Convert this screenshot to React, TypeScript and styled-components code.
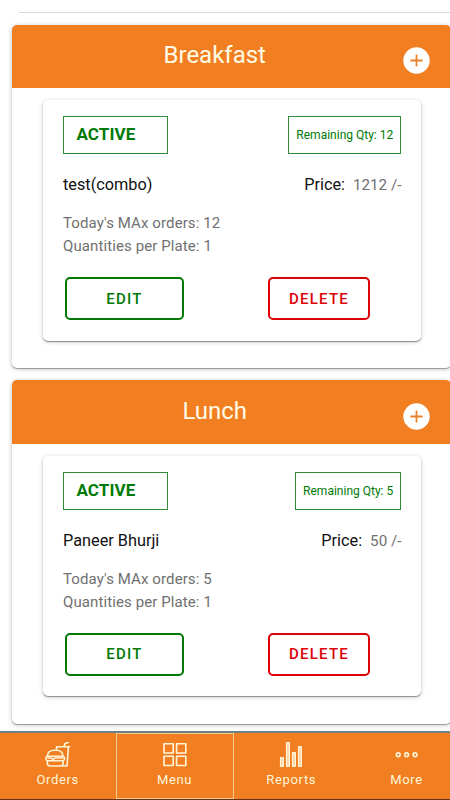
import React from "react";
import styled, { createGlobalStyle } from "styled-components";

const GlobalStyle = createGlobalStyle`
  * { box-sizing: border-box; }
  body { margin: 0; background: #fff; font-family: Roboto, sans-serif; overflow: hidden; }
`;

const Screen = styled.div`
  width: 450px;
  height: 800px;
  display: flex;
  flex-direction: column;
  overflow: hidden;
  background: #fff;
`;

const Content = styled.main`
  height: 731px;
  flex: none;
  overflow: hidden;
`;

const Divider = styled.div`
  height: 13px;
  margin: 0 0 12px 19px;
  border-bottom: 1px solid #d8d8d8;
`;

const Section = styled.section`
  width: 439px;
  height: 343.4px;
  margin: 0 0 12px 12px;
  border-radius: 5px;
  background: #fff;
  box-shadow: 0 1px 1px rgba(0, 0, 0, 0.3), 0 1px 5px rgba(0, 0, 0, 0.24);
`;

const SectionHeader = styled.header`
  height: 63.3px;
  display: grid;
  grid-template-columns: 1fr 27px;
  padding-right: 21px;
  border-radius: 5px 5px 0 0;
  background: #f17f21;
  color: #fffbe6;
`;

const SectionTitle = styled.h2`
  margin: 0;
  padding: 16.2px 0 0 14.5px;
  font-size: 24px;
  font-weight: 400;
  line-height: 28px;
  text-align: center;
`;

const AddButton = styled.button`
  width: 27px;
  height: 27px;
  margin-top: 22.2px;
  padding: 0;
  border: 0;
  background: none;
  svg { display: block; }
`;

const ItemCard = styled.article`
  width: 378px;
  height: 240.8px;
  margin: 11.9px 0 0 31px;
  padding: 16px 19.6px 0 20px;
  border-radius: 5px;
  background: #fff;
  box-shadow: 0 1px 1px rgba(0, 0, 0, 0.38), 0 1px 5px rgba(0, 0, 0, 0.2);
`;

const Row = styled.div`
  display: flex;
  justify-content: space-between;
`;

const Status = styled.div`
  width: 105px;
  height: 38px;
  padding-left: 12.5px;
  border: 1px solid #2f8b35;
  color: #007a05;
  font-size: 17px;
  font-weight: 700;
  line-height: 35px;
  letter-spacing: 0.1px;
`;

const Quantity = styled.div`
  height: 38px;
  padding: 0 7.2px;
  border: 1px solid #2f8b35;
  color: #007a05;
  font-size: 12px;
  line-height: 36px;
`;

const NameRow = styled(Row)`
  margin-top: 20px;
  font-size: 16.3px;
  line-height: 22px;
  color: #111;
`;

const Amount = styled.span`
  margin-left: 8px;
  font-size: 15.2px;
  color: #707070;
`;

const Details = styled.div`
  margin-top: 16px;
  font-size: 15px;
  line-height: 23px;
  letter-spacing: 0.1px;
  color: #707070;
`;

const Actions = styled(Row)`
  margin-top: 19px;
  padding: 0 31.4px 0 2px;
`;

const ActionButton = styled.button<{ $danger?: boolean }>`
  width: ${p => (p.$danger ? 102 : 119)}px;
  height: 43.2px;
  padding: 0;
  border: 2px solid;
  border-radius: 5px;
  background: #fff;
  color: ${p => (p.$danger ? "#dc0206" : "#007a05")};
  font: 500 15px/38px Roboto, sans-serif;
  letter-spacing: 1.25px;
`;

const TabBar = styled.nav`
  height: 69px;
  flex: none;
  display: grid;
  grid-template-columns: 115.5px 118px 115.5px 115px;
  border-top: 2px solid #6f8185;
  border-bottom: 1px solid #65351a;
  background: #f17f21;
`;

const Tab = styled.button<{ $active?: boolean }>`
  display: flex;
  flex-direction: column;
  align-items: center;
  padding: ${p => (p.$active ? 7 : 8)}px 0 0;
  border: ${p => (p.$active ? "1px solid #f3cc90" : "0")};
  background: none;
  color: #fff5d9;
  font: 400 13px/16px Roboto, sans-serif;
  letter-spacing: 0.65px;
  svg { display: block; margin-bottom: 3px; }
`;

const PlusIcon = () => (
  <svg width="27" height="27" viewBox="0 0 27 27">
    <circle cx="13.5" cy="13.5" r="13.2" fill="#fff" />
    <path d="M13.5 7.4v12.2M7.4 13.5h12.2" stroke="#e8832c" strokeWidth="1.8" />
  </svg>
);

const stroke = { fill: "none", stroke: "#fff5d9", strokeWidth: 1.6, strokeLinejoin: "round" as const, strokeLinecap: "round" as const };

const OrdersIcon = () => (
  <svg width="28" height="28" viewBox="0 0 28 28" {...stroke}>
    <path d="M12.5 8.3V5.8h13.2M20 5.5l1-3 3.2-1M24.4 6.3 23 25h-4.5" />
    <path d="M3.3 15.3c.2-3.8 3-6 7.2-6h1.4c4.2 0 7 2.2 7.2 6z" />
    <path d="M3.3 15.3c-2 .8-2 3.8 0 4.4h15.8c2-.6 2-3.6 0-4.4M4 17h3.2l1.8 1.7 2-1.7h7.5M3.3 20v2c0 1.8 1 3 2.8 3h10.2c1.8 0 2.8-1.2 2.8-3v-2" />
  </svg>
);

const MenuIcon = () => (
  <svg width="28" height="28" viewBox="0 0 28 28" {...stroke}>
    <path d="M3 2.8h9.2V12H3zM15.6 2.8h9.2V12h-9.2zM3 15.3h9.2v9.2H3zM15.6 15.3h9.2v9.2h-9.2z" />
  </svg>
);

const ReportsIcon = () => (
  <svg width="28" height="28" viewBox="0 0 28 28" {...stroke} fill="#f5b679">
    <path d="M3.7 16.7h2.5v8.6H3.7zM9.7 1.8h2.5v23.5H9.7zM15.7 11.9h2.5v13.4h-2.5zM21.7 5.8h2.5v19.5h-2.5z" />
  </svg>
);

const MoreIcon = () => (
  <svg width="28" height="28" viewBox="0 0 28 28" {...stroke}>
    <circle cx="5.2" cy="13.8" r="1.9" /><circle cx="13.6" cy="13.8" r="1.9" /><circle cx="22" cy="13.8" r="1.9" />
  </svg>
);

const meals = [
  { title: "Breakfast", name: "test(combo)", quantity: 12, price: 1212 },
  { title: "Lunch", name: "Paneer Bhurji", quantity: 5, price: 50 },
];

export default function App() {
  return (
    <Screen>
      <GlobalStyle />
      <Content>
        <Divider />
        {meals.map(meal => (
          <Section key={meal.title}>
            <SectionHeader>
              <SectionTitle>{meal.title}</SectionTitle>
              <AddButton aria-label={`Add to ${meal.title}`}><PlusIcon /></AddButton>
            </SectionHeader>
            <ItemCard>
              <Row>
                <Status>ACTIVE</Status>
                <Quantity>Remaining Qty: {meal.quantity}</Quantity>
              </Row>
              <NameRow>
                <span>{meal.name}</span>
                <span>Price:<Amount>{meal.price} /-</Amount></span>
              </NameRow>
              <Details>
                <div>Today's MAx orders: {meal.quantity}</div>
                <div>Quantities per Plate: 1</div>
              </Details>
              <Actions>
                <ActionButton>EDIT</ActionButton>
                <ActionButton $danger>DELETE</ActionButton>
              </Actions>
            </ItemCard>
          </Section>
        ))}
      </Content>
      <TabBar>
        <Tab><OrdersIcon />Orders</Tab>
        <Tab $active><MenuIcon />Menu</Tab>
        <Tab><ReportsIcon />Reports</Tab>
        <Tab><MoreIcon />More</Tab>
      </TabBar>
    </Screen>
  );
}
